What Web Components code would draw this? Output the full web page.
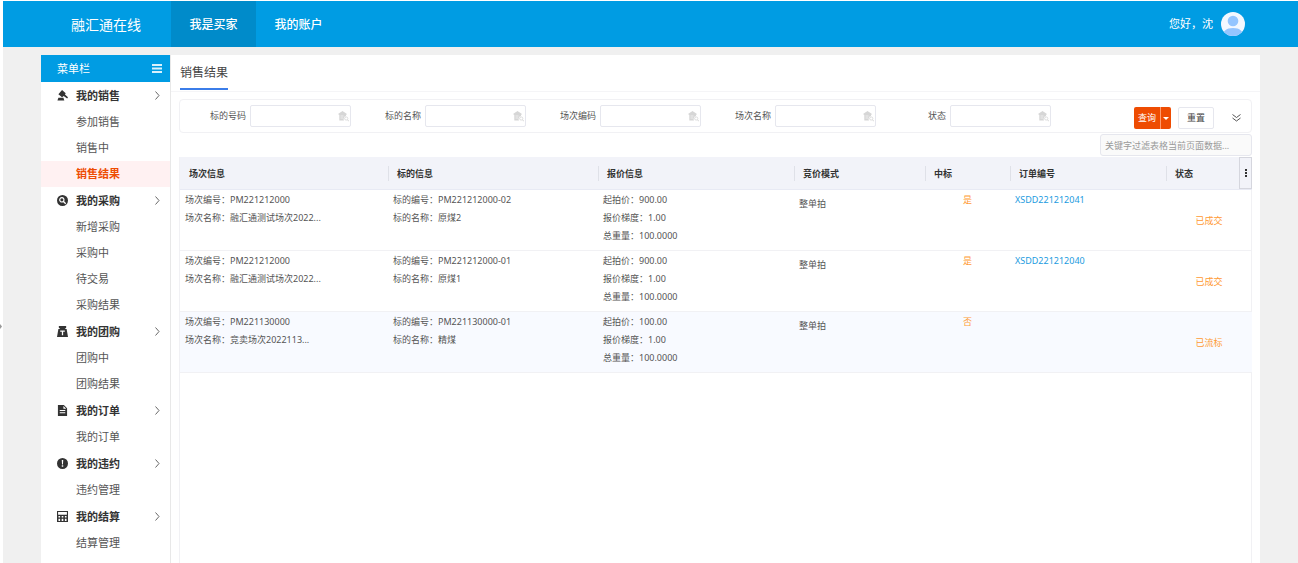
<!DOCTYPE html>
<html lang="zh-CN">
<head>
<meta charset="utf-8">
<title>融汇通在线</title>
<style>
  html { height: 100%; }
  body {
    margin: 0; min-height: 100%; background: #fff; color: #555;
    font: 9px/18px "Noto Sans", "Noto Sans CJK SC", sans-serif;
    --blue: #009ce3; --orange: #ee4c02; --line: #f1f1f4; --amber: #ff9a33;
  }
</style>
</head>
<body>
<trade-app></trade-app>

<script>
const define = (name, html, setup) => {
  const template = document.createElement('template');
  template.innerHTML = html;
  customElements.define(name, class extends HTMLElement {
    constructor() {
      super();
      this.attachShadow({ mode: 'open' }).append(template.content.cloneNode(true));
    }
    connectedCallback() {
      if (setup && !this.ready) { this.ready = true; setup(this, this.shadowRoot); }
    }
  });
};

const icons = {
  gavel: '<path d="M5.500 0l4 3.500-.8 1.500 3.300 3-.9 1.200L7.300 6.500 5.500 8 1.500 4.500z"/><path d="M1.500 8.500h5.500L8 11.500H.5z"/>',
  search: '<path fill-rule="evenodd" d="M6 0a6 6 0 100 12A6 6 0 006 0zM5.300 2.300a3 3 0 012.500 4.600L10 9 9 10 6.800 7.900A3 3 0 115.300 2.300zm0 1.300a1.700 1.700 0 100 3.400 1.700 1.700 0 000-3.400z"/>',
  bag: '<path fill-rule="evenodd" d="M2 0h8v1.800L8.500 3.200h2L12 12H0L1.500 3.200h2L2 1.800zM3.500 5v1.200h1.800V10h1.400V6.200h1.800V5z"/>',
  doc: '<path fill-rule="evenodd" d="M1 0h6.500L11 3.500V12H1zM7 1v3h3zM3 5.500v1h6v-1zM3 8v1h6V8z"/>',
  alert: '<path fill-rule="evenodd" d="M6 0a6 6 0 100 12A6 6 0 006 0zM5.200 2.300h1.600L6.500 7h-1zM5.200 8h1.600v1.600H5.200z"/>',
  calc: '<path fill-rule="evenodd" d="M0 0h12v12H0zM1.200 1.200v2.800h9.600V1.200zM1.600 5.500v1.500h1.800V5.500zm3.500 0v1.500h1.800V5.500zm3.500 0v1.500h1.800V5.500zM1.600 8.500v2.500h1.800V8.500zm3.500 0v2.500h1.800V8.500zm3.500 0v2.500h1.800V8.500z"/>'
};

define('top-bar', `
  <style>
    :host { display: flex; height: 46px; padding: 0 53px 0 38px; background: var(--blue); color: #fff; box-sizing: border-box; }
    h1 { width: 130px; margin: 0; font-size: 14px; line-height: 48px; font-weight: 400; text-align: center; }
    nav { display: flex; flex: 1; }
    nav a { width: 85px; line-height: 48px; font-size: 12px; font-weight: 500; text-align: center; color: #fff; text-decoration: none; }
    nav a.on { background: #008bca; }
    nav a { height: 46px; }
    .user { display: flex; align-items: center; gap: 8px; font-size: 11px; }
  </style>
  <h1>融汇通在线</h1>
  <nav><a class="on" href="#buyer">我是买家</a><a href="#account">我的账户</a></nav>
  <div class="user"><span>您好，沈</span>
    <svg width="24" height="24" viewBox="0 0 24 24"><defs><clipPath id="round"><circle cx="12" cy="12" r="12"/></clipPath></defs>
      <g clip-path="url(#round)"><path fill="#f3f8ff" d="M0 0h24v24H0z"/><circle cx="12" cy="9" r="5.300" fill="#94c5ff"/><path fill="#94c5ff" d="M2 24c0-5 3-8 10-8s10 3 10 8z"/></g></svg>
  </div>`);

define('menu-item', `
  <style>
    :host { display: block; }
    a { display: block; padding-left: 35px; font-size: 11px; line-height: 26px; color: #555; text-decoration: none; }
    :host([active]) a { background: #fff1f2; color: var(--orange); font-weight: 700; }
  </style>
  <a href="#"><slot></slot></a>`);

define('menu-group', `
  <style>
    :host { display: block; }
    button { display: flex; align-items: center; width: 100%; height: 27px; padding: 0 10px 0 16px; border: 0; background: none;
      font: 700 11px/27px "Noto Sans", "Noto Sans CJK SC", sans-serif; color: #333; text-align: left; }
    .icon { width: 11px; height: 11px; fill: #333; margin-right: 8px; }
    span { flex: 1; }
    .arrow { fill: none; stroke: #666; }
  </style>
  <button type="button"><svg class="icon" viewBox="0 0 12 12"></svg><span></span>
    <svg class="arrow" width="5" height="9" viewBox="0 0 5 9"><path d="M.5.5l3.500 4-3.500 4"/></svg></button>
  <slot></slot>`, (el, root) => {
    root.querySelector('.icon').innerHTML = icons[el.getAttribute('icon')];
    root.querySelector('span').textContent = el.getAttribute('label');
  });

define('side-menu', `
  <style>
    :host { display: block; background: #fff; border-right: 1px solid #e8e8e8; }
    header { display: flex; align-items: center; justify-content: space-between; height: 27px; padding: 0 8px 0 16px; background: var(--blue); color: #fff; font-size: 11px; box-sizing: border-box; }
  </style>
  <header><span>菜单栏</span><svg width="10" height="9" viewBox="0 0 10 9" fill="#d9f1fc"><path d="M0 0h10v2H0zM0 3.500h10v2H0zM0 7h10v2H0z"/></svg></header>
  <menu-group icon="gavel" label="我的销售"><menu-item>参加销售</menu-item><menu-item>销售中</menu-item><menu-item active>销售结果</menu-item></menu-group>
  <menu-group icon="search" label="我的采购"><menu-item>新增采购</menu-item><menu-item>采购中</menu-item><menu-item>待交易</menu-item><menu-item>采购结果</menu-item></menu-group>
  <menu-group icon="bag" label="我的团购"><menu-item>团购中</menu-item><menu-item>团购结果</menu-item></menu-group>
  <menu-group icon="doc" label="我的订单"><menu-item>我的订单</menu-item></menu-group>
  <menu-group icon="alert" label="我的违约"><menu-item>违约管理</menu-item></menu-group>
  <menu-group icon="calc" label="我的结算"><menu-item>结算管理</menu-item></menu-group>`);

define('filter-field', `
  <style>
    :host { display: flex; align-items: center; justify-content: flex-end; gap: 4px; min-width: 0; }
    .box { display: flex; align-items: center; width: 101px; height: 22px; padding-right: 1px; border: 1px solid #e6e7ee; border-radius: 2px; box-sizing: border-box; }
    input { flex: 1; min-width: 0; height: 18px; padding: 0 4px; border: 0; outline: 0; background: none; font: inherit; box-sizing: border-box; }
  </style>
  <label for="field"></label>
  <div class="box"><input id="field" type="text">
    <svg width="11" height="11" viewBox="0 0 11 11" fill="#d6d6d6"><path d="M0 3l4.500-3L9 3 8 4v1a3 3 0 00-2 4.500H1.300V4z"/><path d="M2.500 5h3M2.500 7h2.500" stroke="#fff" stroke-width=".6"/><circle cx="8.200" cy="7.500" r="1.600" fill="none" stroke="#d6d6d6" stroke-width=".8"/><path d="M9.200 9l.6-.6L11 9.800l-.6.600z"/></svg></div>`,
  (el, root) => { root.querySelector('label').textContent = el.getAttribute('label'); });

define('filter-form', `
  <style>
    :host { display: block; }
    form { display: flex; height: 34px; border: 1px solid var(--line); border-radius: 4px; box-sizing: border-box; }
    .fields { flex: 1; display: grid; grid-template-columns: 171fr repeat(4, 175fr); align-items: center; }
    .actions { display: flex; align-items: center; justify-content: flex-end; width: 200px; padding: 4px 10px 0 0; box-sizing: border-box; }
    button { height: 22px; padding: 0; font: inherit; box-sizing: border-box; }
    .query { width: 26px; border: 0; border-radius: 2px 0 0 2px; background: var(--orange); color: #fff; }
    .more { display: grid; place-items: center; width: 11px; border: 0; border-left: 1px solid #ff9b6c; border-radius: 0 2px 2px 0; background: var(--orange); }
    .reset { width: 36px; margin: 0 17px 0 7px; border: 1px solid #e6e7ee; border-radius: 2px; background: #fff; color: #444; }
    .expand { display: grid; place-items: center; width: 10px; border: 0; background: none; }
  </style>
  <form>
    <div class="fields"><filter-field label="标的号码"></filter-field><filter-field label="标的名称"></filter-field><filter-field label="场次编码"></filter-field><filter-field label="场次名称"></filter-field><filter-field label="状态"></filter-field></div>
    <div class="actions"><button class="query" type="button">查询</button><button class="more" type="button" aria-label="更多"><svg width="6" height="3" viewBox="0 0 6 3"><path fill="#fff" d="M0 0h6L3 3z"/></svg></button>
      <button class="reset" type="button">重置</button>
      <button class="expand" type="button" aria-label="展开"><svg width="9" height="8" viewBox="0 0 9 8" fill="none" stroke="#555"><path d="M.5.5l4 3 4-3M.5 4l4 3 4-3"/></svg></button></div>
  </form>`);

define('result-table', `
  <style>
    :host { display: block; flex: 1; border: solid var(--line); border-width: 0 1px; margin-top: 1px; }
    table { width: 100%; table-layout: fixed; border-collapse: separate; border-spacing: 0; }
    th { height: 33px; padding: 0; background: #f2f3f9; border-bottom: 1px solid #e8eaf4; color: #333; font-weight: 700; text-align: left; box-sizing: border-box; }
    th div { display: flex; align-items: center; height: 15px; line-height: 15px; padding-left: 8px; border-left: 1px solid #dfe1e8; }
    th:first-child div { border-color: transparent; }
    th .last { justify-content: space-between; }
    .cols { display: grid; place-items: center; width: 13px; height: 32px; padding: 0; border: 1px solid #d5d6de; background: #f2f3f9; }
    td { height: 61px; padding: 1px 0 0 5px; border-bottom: 1px solid var(--line); vertical-align: top; box-sizing: border-box; overflow: hidden; white-space: nowrap; }
    tbody tr:last-child td { background: #f8faff; }
    td div { height: 18px; }
    td.mode { padding-top: 5px; }
    td.win { padding-left: 0; text-align: center; color: var(--amber); }
    td.state { padding-left: 0; text-align: center; vertical-align: middle; color: var(--amber); }
    a { color: #1b9be0; text-decoration: none; }
  </style>
  <table>
    <colgroup><col style="width:208px"><col style="width:210px"><col style="width:196px"><col style="width:131px"><col style="width:85px"><col style="width:156px"><col style="width:86px"></colgroup>
    <thead><tr><th><div>场次信息</div></th><th><div>标的信息</div></th><th><div>报价信息</div></th><th><div>竞价模式</div></th><th><div>中标</div></th><th><div>订单编号</div></th>
      <th><div class="last"><span>状态</span><button class="cols" type="button" aria-label="列设置"><svg width="2" height="8" viewBox="0 0 2 8" fill="#333"><path d="M0 0h2v2H0zM0 3h2v2H0zM0 6h2v2H0z"/></svg></button></div></th></tr></thead>
    <tbody></tbody>
  </table>`, (el, root) => {
    const rows = [
      ['PM221212000', '融汇通测试场次2022...', 'PM221212000-02', '原煤2', '900.00', '是', 'XSDD221212041', '已成交'],
      ['PM221212000', '融汇通测试场次2022...', 'PM221212000-01', '原煤1', '900.00', '是', 'XSDD221212040', '已成交'],
      ['PM221130000', '竞卖场次2022113...', 'PM221130000-01', '精煤', '100.00', '否', '', '已流标']
    ];
    root.querySelector('tbody').innerHTML = rows.map(([no, name, lot, lotName, price, win, order, state]) => `<tr>
      <td><div>场次编号：${no}</div><div>场次名称：${name}</div></td>
      <td><div>标的编号：${lot}</div><div>标的名称：${lotName}</div></td>
      <td><div>起拍价：${price}</div><div>报价梯度：1.00</div><div>总重量：100.0000</div></td>
      <td class="mode">整单拍</td><td class="win">${win}</td>
      <td>${order ? `<a href="#${order}">${order}</a>` : ''}</td><td class="state">${state}</td></tr>`).join('');
  });

define('result-page', `
  <style>
    :host { display: flex; flex-direction: column; flex: 1; min-width: 0; background: #fff; }
    .head { display: flex; height: 37px; padding-left: 9px; border-bottom: 1px solid #f5f5f7; box-sizing: border-box; }
    h2 { height: 35px; margin: 0; font-size: 12px; line-height: 36px; font-weight: 400; color: #444; border-bottom: 2px solid #3b7de9; box-sizing: border-box; }
    .body { display: flex; flex-direction: column; flex: 1; padding: 7px 8px 0; }
    .quick { align-self: flex-end; width: 152px; height: 22px; margin-top: 1px; padding: 0 4px; border: 1px solid #e6e7ee; border-radius: 3px; background: #fafafa; font: inherit; box-sizing: border-box; }
    .quick::placeholder { color: #999; opacity: 1; }
  </style>
  <div class="head"><h2>销售结果</h2></div>
  <div class="body">
    <filter-form></filter-form>
    <input class="quick" type="text" aria-label="过滤" placeholder="关键字过滤表格当前页面数据...">
    <result-table></result-table>
  </div>`);

define('trade-app', `
  <style>
    :host { display: flex; flex-direction: column; min-height: 100vh; padding: 1px 0 0 3px; box-sizing: border-box; }
    main { display: flex; flex: 1; padding: 8px 38px 0; background: #f0f0f0; }
    side-menu { width: 129px; flex: none; }
    .handle { position: absolute; left: 0; top: 324px; }
  </style>
  <top-bar></top-bar>
  <main><side-menu></side-menu><result-page></result-page></main>
  <svg class="handle" width="2" height="5" viewBox="0 0 2 5"><path fill="#999" d="M0 0l2 2.500L0 5z"/></svg>`);
</script>
</body>
</html>
